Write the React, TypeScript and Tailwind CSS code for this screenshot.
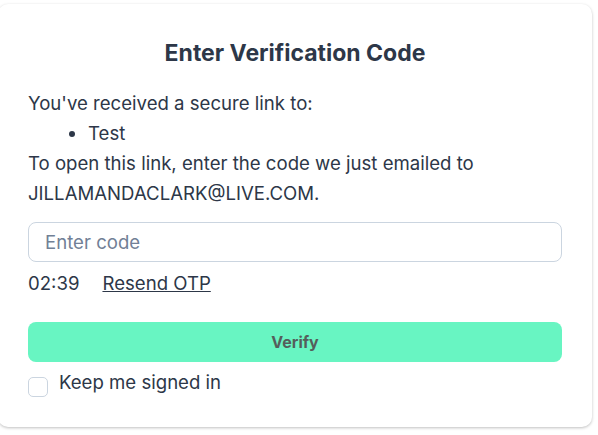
import React from 'react';

export default function App() {
  return (
    <div className="min-h-[435px] w-[598px] bg-white pt-[4px] font-['Inter',sans-serif] text-[#2d3748]">
      <div className="ml-[-2px] h-[423px] w-[594px] rounded-[10px] bg-white px-[30px] pt-[34px] shadow-[0_1px_3px_rgba(0,0,0,0.25)]">
        {/* ヘッダー */}
        <h1 className="text-center text-[23px] font-bold leading-[30px]">Enter Verification Code</h1>

        {/* 本文 */}
        <div className="mt-[20px] text-[18.6px] leading-[30px]">
          <p>You've received a secure link to:</p>
          <ul className="list-disc pl-[60px]">
            <li>Test</li>
          </ul>
          <p>To open this link, enter the code we just emailed to JILLAMANDACLARK@LIVE.COM.</p>
        </div>

        <input
          type="text"
          placeholder="Enter code"
          className="mt-[14px] block h-[40px] w-full rounded-[8px] border border-[#cbd5e0] px-[16px] text-[18.6px] placeholder:text-[#718096] outline-none"
        />

        <div className="mt-[6px] flex gap-[23px] text-[18.6px] leading-[30px]">
          <span>02:39</span>
          <a href="#" className="underline">Resend OTP</a>
        </div>

        <button className="mt-[24px] block h-[40px] w-full rounded-[8px] bg-[#68f5c2] text-[16px] font-bold text-[#555e5b]">
          Verify
        </button>

        <label className="mt-[8px] flex items-start gap-[11px] text-[18.6px] leading-[24px]">
          <span className="mt-[7px] block h-[20px] w-[20px] rounded-[5px] border border-[#cbd5e0] bg-white" />
          Keep me signed in
        </label>
      </div>
    </div>
  );
}
